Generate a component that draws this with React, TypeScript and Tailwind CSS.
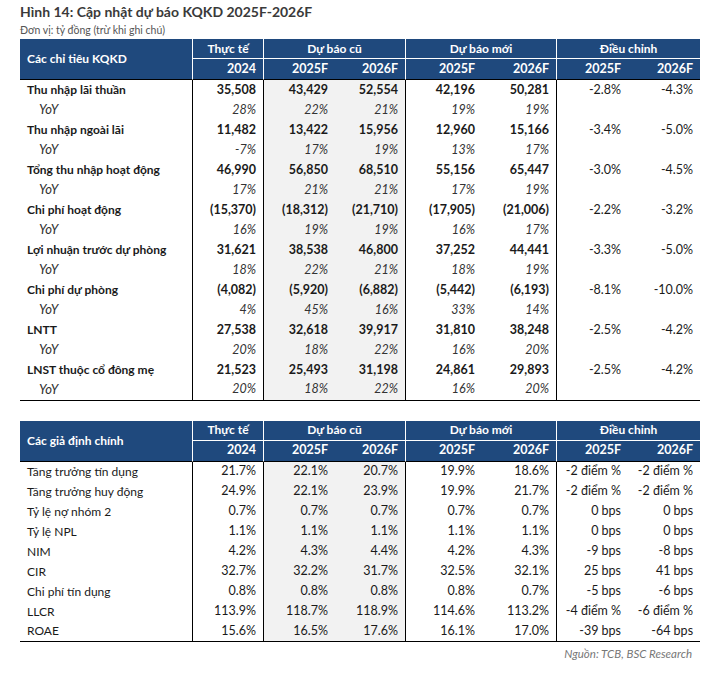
import React from 'react';

type Row = { label: string; vals: string[]; yoy?: boolean };

const KQKD: Row[] = [
  { label: 'Thu nhập lãi thuần', vals: ['35,508', '43,429', '52,554', '42,196', '50,281', '-2.8%', '-4.3%'] },
  { label: 'YoY', yoy: true, vals: ['28%', '22%', '21%', '19%', '19%', '', ''] },
  { label: 'Thu nhập ngoài lãi', vals: ['11,482', '13,422', '15,956', '12,960', '15,166', '-3.4%', '-5.0%'] },
  { label: 'YoY', yoy: true, vals: ['-7%', '17%', '19%', '13%', '17%', '', ''] },
  { label: 'Tổng thu nhập hoạt động', vals: ['46,990', '56,850', '68,510', '55,156', '65,447', '-3.0%', '-4.5%'] },
  { label: 'YoY', yoy: true, vals: ['17%', '21%', '21%', '17%', '19%', '', ''] },
  { label: 'Chi phí hoạt động', vals: ['(15,370)', '(18,312)', '(21,710)', '(17,905)', '(21,006)', '-2.2%', '-3.2%'] },
  { label: 'YoY', yoy: true, vals: ['16%', '19%', '19%', '16%', '17%', '', ''] },
  { label: 'Lợi nhuận trước dự phòng', vals: ['31,621', '38,538', '46,800', '37,252', '44,441', '-3.3%', '-5.0%'] },
  { label: 'YoY', yoy: true, vals: ['18%', '22%', '21%', '18%', '19%', '', ''] },
  { label: 'Chi phí dự phòng', vals: ['(4,082)', '(5,920)', '(6,882)', '(5,442)', '(6,193)', '-8.1%', '-10.0%'] },
  { label: 'YoY', yoy: true, vals: ['4%', '45%', '16%', '33%', '14%', '', ''] },
  { label: 'LNTT', vals: ['27,538', '32,618', '39,917', '31,810', '38,248', '-2.5%', '-4.2%'] },
  { label: 'YoY', yoy: true, vals: ['20%', '18%', '22%', '16%', '20%', '', ''] },
  { label: 'LNST thuộc cổ đông mẹ', vals: ['21,523', '25,493', '31,198', '24,861', '29,893', '-2.5%', '-4.2%'] },
  { label: 'YoY', yoy: true, vals: ['20%', '18%', '22%', '16%', '20%', '', ''] },
];

const ASSUMPTIONS: Row[] = [
  { label: 'Tăng trưởng tín dụng', vals: ['21.7%', '22.1%', '20.7%', '19.9%', '18.6%', '-2 điểm %', '-2 điểm %'] },
  { label: 'Tăng trưởng huy động', vals: ['24.9%', '22.1%', '23.9%', '19.9%', '21.7%', '-2 điểm %', '-2 điểm %'] },
  { label: 'Tỷ lệ nợ nhóm 2', vals: ['0.7%', '0.7%', '0.7%', '0.7%', '0.7%', '0 bps', '0 bps'] },
  { label: 'Tỷ lệ NPL', vals: ['1.1%', '1.1%', '1.1%', '1.1%', '1.1%', '0 bps', '0 bps'] },
  { label: 'NIM', vals: ['4.2%', '4.3%', '4.4%', '4.2%', '4.3%', '-9 bps', '-8 bps'] },
  { label: 'CIR', vals: ['32.7%', '32.2%', '31.7%', '32.5%', '32.1%', '25 bps', '41 bps'] },
  { label: 'Chi phí tín dụng', vals: ['0.8%', '0.8%', '0.8%', '0.8%', '0.7%', '-5 bps', '-6 bps'] },
  { label: 'LLCR', vals: ['113.9%', '118.7%', '118.9%', '114.6%', '113.2%', '-4 điểm %', '-6 điểm %'] },
  { label: 'ROAE', vals: ['15.6%', '16.5%', '17.6%', '16.1%', '17.0%', '-39 bps', '-64 bps'] },
];

const years = ['2024', '2025F', '2026F', '2025F', '2026F', '2025F', '2026F'];

// black divider after Thực tế, Dự báo cũ, Dự báo mới
const bodyBorder = ['border-r border-black', '', 'border-r border-black', '', 'border-r border-black', '', ''];
const headBorder = ['border-r border-white', '', 'border-r border-white', '', 'border-r border-white', '', ''];

const DataTable: React.FC<{ title: string; rows: Row[]; boldMain: boolean }> = ({ title, rows, boldMain }) => (
  <table className="w-[680px] table-fixed border-separate border-spacing-0 text-[12px] text-[#1a1a1a]">
    <colgroup>
      <col className="w-[173px]" />
      <col className="w-[71px]" />
      <col className="w-[71px]" />
      <col className="w-[71px]" />
      <col className="w-[76px]" />
      <col className="w-[75px]" />
      <col className="w-[71px]" />
      <col className="w-[72px]" />
    </colgroup>
    <thead>
      <tr className="h-[20px]">
        <th rowSpan={2} className="bg-[#1f497d] border-r border-white border-b-[1.5px] border-b-black pl-[7px] text-left font-bold text-white">
          {title}
        </th>
        <th className="bg-[#1f497d] border-r border-b border-white text-center font-bold text-white">Thực tế</th>
        <th colSpan={2} className="bg-[#1f497d] border-r border-b border-white text-center font-bold text-white">Dự báo cũ</th>
        <th colSpan={2} className="bg-[#1f497d] border-r border-b border-white text-center font-bold text-white">Dự báo mới</th>
        <th colSpan={2} className="bg-[#1f497d] border-b border-white text-center font-bold text-white">Điều chỉnh</th>
      </tr>
      <tr className="h-[21px]">
        {years.map((y, i) => (
          <th key={i} className={`bg-[#1f497d] border-b-[1.5px] border-b-black pr-[7px] text-right text-[12.5px] font-bold text-white ${headBorder[i]}`}>
            {y}
          </th>
        ))}
      </tr>
    </thead>
    <tbody>
      {rows.map((r, ri) => {
        const last = ri === rows.length - 1;
        const bold = boldMain && !r.yoy;
        return (
          <tr key={ri} className="h-[20px]">
            <td
              className={`border-r border-black whitespace-nowrap ${last ? 'border-b-[1.5px] border-b-black' : ''} ${
                r.yoy ? 'pl-[19px] text-[13px] italic text-[#333]' : 'pl-[7px]'
              } ${bold ? 'font-bold' : ''}`}
            >
              {r.label}
            </td>
            {r.vals.map((v, i) => (
              <td
                key={i}
                className={`pr-[7px] text-right text-[12.5px] whitespace-nowrap ${bodyBorder[i] ?? ''} ${
                  i === 1 || i === 2 ? 'bg-[#f2f2f2]' : ''
                } ${last ? 'border-b-[1.5px] border-b-black' : ''} ${r.yoy ? 'italic text-[#333]' : ''} ${
                  bold && i < 5 ? 'font-bold' : ''
                }`}
              >
                {v}
              </td>
            ))}
          </tr>
        );
      })}
    </tbody>
  </table>
);

export default function App() {
  return (
    <div className="w-[720px] h-[674px] bg-white pl-[20px] pt-[2px] font-['Lato','Open_Sans',sans-serif]">
      <h1 className="text-[14px] font-bold leading-[20px] text-[#3a3a3a]">Hình 14: Cập nhật dự báo KQKD 2025F-2026F</h1>
      <p className="text-[10.5px] leading-[16px] text-[#555]">Đơn vị: tỷ đồng (trừ khi ghi chú)</p>
      <div className="mt-[1px]">
        <DataTable title="Các chỉ tiêu KQKD" rows={KQKD} boldMain />
      </div>
      <div className="mt-[20px]">
        <DataTable title="Các giả định chính" rows={ASSUMPTIONS} boldMain={false} />
      </div>
      <p className="w-[672px] pt-[3px] text-right text-[11.5px] italic text-[#777]">Nguồn: TCB, BSC Research</p>
    </div>
  );
}
